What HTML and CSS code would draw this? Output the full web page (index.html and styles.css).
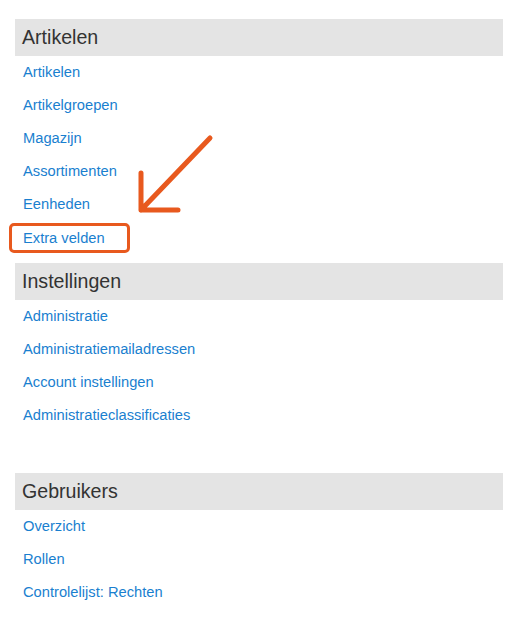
FILE: index.html
```html
<!DOCTYPE html>
<html lang="en">
<head>
    <meta charset="UTF-8">
    <title>Instellingen</title>
    <link rel="stylesheet" href="styles.css">
</head>
<body>
    <div class="menu">
        <div class="section">
            <h2>Artikelen</h2>
            <ul>
                <li><a href="#">Artikelen</a></li>
                <li><a href="#">Artikelgroepen</a></li>
                <li><a href="#">Magazijn</a></li>
                <li><a href="#">Assortimenten</a></li>
                <li><a href="#">Eenheden</a></li>
                <li class="highlight"><a href="#">Extra velden</a></li>
            </ul>
        </div>
        <div class="section wide">
            <h2>Instellingen</h2>
            <ul>
                <li><a href="#">Administratie</a></li>
                <li><a href="#">Administratiemailadressen</a></li>
                <li><a href="#">Account instellingen</a></li>
                <li><a href="#">Administratieclassificaties</a></li>
            </ul>
        </div>
        <div class="section">
            <h2>Gebruikers</h2>
            <ul>
                <li><a href="#">Overzicht</a></li>
                <li><a href="#">Rollen</a></li>
                <li><a href="#">Controlelijst: Rechten</a></li>
            </ul>
        </div>

        <svg class="arrow" width="90" height="90" viewBox="0 0 90 90">
            <path d="M80 8 L11 80 M11 43 L11 80 L48 80" fill="none" stroke="#e8591e" stroke-width="5" stroke-linecap="round" stroke-linejoin="round"/>
        </svg>
    </div>
</body>
</html>
```

FILE: styles.css
```css
*{
    margin: 0;
    padding: 0;
    box-sizing: border-box;
}

body{
    background: #fff;
    font-family: "Liberation Sans", Arial, sans-serif;
}

.menu{
    position: relative;
    width: 488px;
    margin-left: 15px;
    padding-top: 19px;
}

.section{
    margin-bottom: 9px;
}

.section.wide{
    margin-bottom: 41px;
}

h2{
    background-color: #e4e4e4;
    color: #333;
    font-size: 19.6px;
    font-weight: normal;
    height: 37px;
    line-height: 37px;
    padding-left: 7px;
}

ul{
    list-style: none;
}

li{
    height: 33px;
    line-height: 33px;
    padding-left: 8px;
    font-size: 14.7px;
}

li a{
    color: #1a7fcf;
    text-decoration: none;
}

.highlight{
    padding-left: 0;
    margin-left: -6px;
}

.highlight a{
    display: inline-block;
    vertical-align: middle;
    line-height: 24px;
    border: 3px solid #e8591e;
    border-radius: 5px;
    padding: 0 22px 0 11px;
}

.arrow{
    position: absolute;
    left: 115px;
    top: 130px;
}
```
